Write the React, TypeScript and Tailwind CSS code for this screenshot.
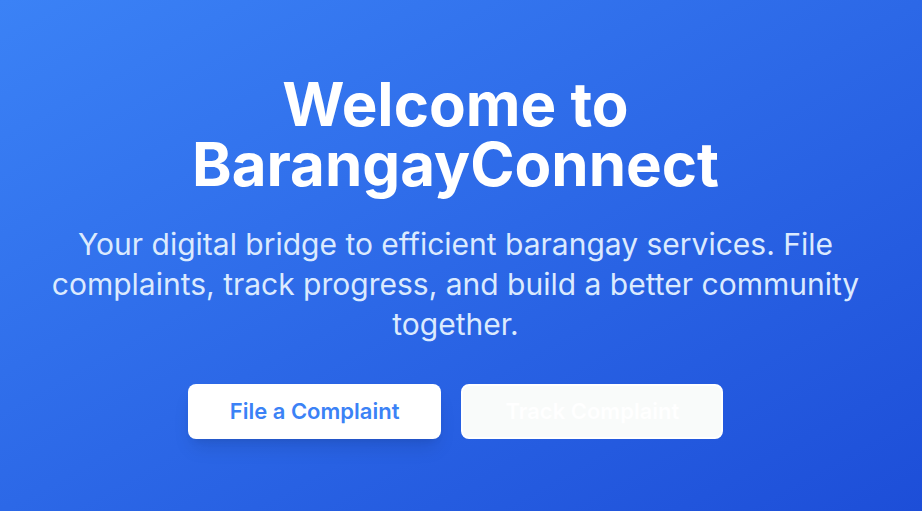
export default function App() {
  return (
    <main className="flex min-h-screen flex-col items-center justify-center bg-[linear-gradient(to_bottom_right,#3b82f6,#1d4ed8)] pt-0.5 pr-[51px] pl-10 text-center font-['Inter',sans-serif] text-white">
      <h1 className="mb-[30px] max-w-[700px] text-[60px] leading-[60px] font-bold">
        Welcome to
        <br />
        BarangayConnect
      </h1>
      <p className="mb-10 text-[30px] leading-10 text-[#dbeafe]">
        Your digital bridge to efficient barangay services. File complaints, track progress, and build a better
        community together.
      </p>
      <div className="flex gap-5">
        <button type="button" className="h-[55px] rounded-lg bg-white px-[42px] text-[22px] font-semibold text-[#3b82f6] shadow-[0_12px_19px_-4px_rgba(0,0,0,0.1),0_5px_8px_-5px_rgba(0,0,0,0.1)]">
          File a Complaint
        </button>
        <button type="button" className="h-[55px] rounded-lg border-2 border-white bg-[#f9fbfa] px-[42px] text-[22px] font-semibold text-white">
          Track Complaint
        </button>
      </div>
    </main>
  );
}
